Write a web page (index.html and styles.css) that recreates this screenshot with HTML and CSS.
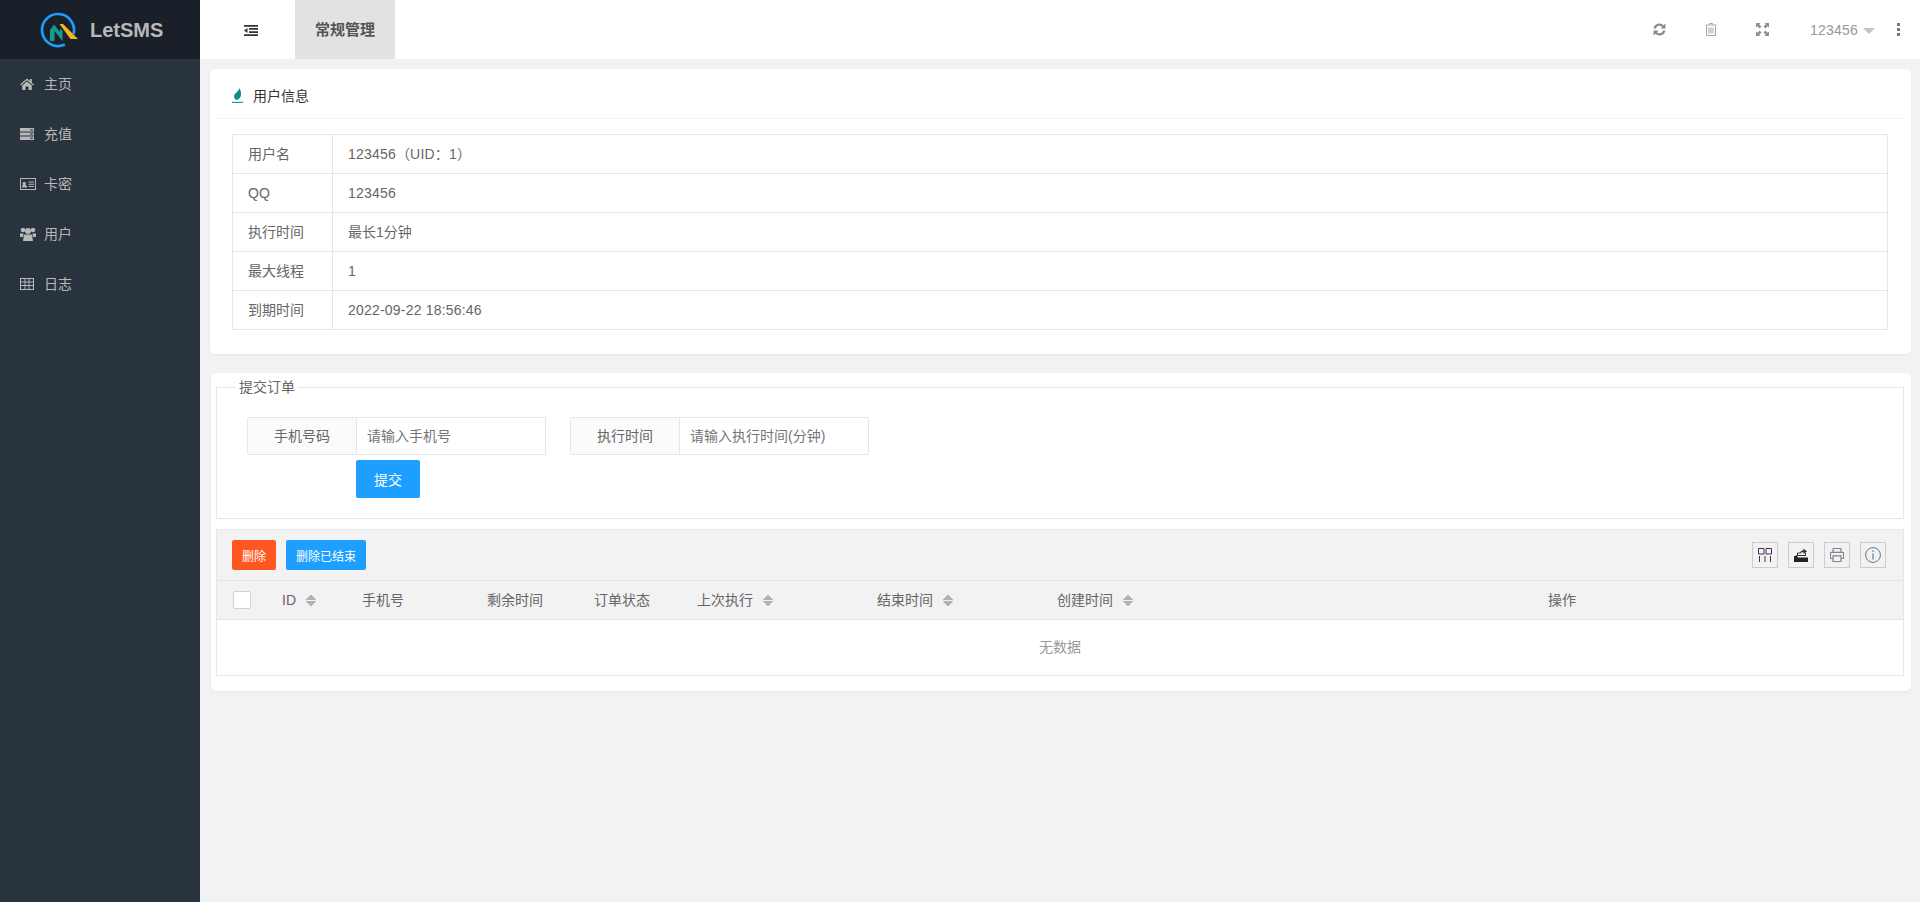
FILE: index.html
```html
<!DOCTYPE html>
<html lang="zh-CN">
<head>
    <meta charset="UTF-8">
    <meta name="viewport" content="width=device-width, initial-scale=1.0">
    <title>LetSMS</title>
    <link rel="stylesheet" href="styles.css">
</head>
<body>
    <div class="side">
        <div class="logo">
            <svg class="logo-mark" width="38" height="36" viewBox="40 12 38 36">
                <path d="M64.800 44.500A16 16 0 1 1 73.500 34.100" fill="none" stroke="#1e9fff" stroke-width="2.600"/>
                <path d="M50 30L54 24.500 60 32V28.500L62.500 31V41L54.500 31V41H50z" fill="#169c8c"/>
                <path d="M59.500 24H63L78 39H70.500z" fill="#f3b61f"/>
            </svg>
            <span class="logo-text">LetSMS</span>
        </div>
        <ul class="menu">
            <li>
                <svg class="menu-icon" viewBox="0 0 14 14"><path d="M7 1.500L0 7.600l.8.900L7 3.200l6.200 5.300.8-.9-2.200-1.900V2h-2v2L7 1.500zM2.200 8.600V13h3.300V9.600h3V13h3.300V8.600L7 4.600z"/></svg>
                <span>主页</span>
            </li>
            <li>
                <svg class="menu-icon" viewBox="0 0 14 14"><path d="M0 1h14v3.400H0zM0 5.400h14v3.200H0zM0 9.600h14V13H0z"/><path d="M10 2.200h3v1h-3zM10 6.500h3v1h-3zM10 10.800h3v1h-3z" fill="#28333e"/></svg>
                <span>充值</span>
            </li>
            <li>
                <svg class="menu-icon wide" viewBox="0 0 16 12"><path d="M0 0h16v12H0zm1 1v10h14V1z" fill-rule="evenodd"/><path d="M3 6.800a1.700 1.700 0 1 1 2.400 0L7 8v1.500H2V8zM8.500 3.500H14v1H8.500zM8.500 5.700H14v1H8.500zM8.500 7.900H14v1H8.500z"/></svg>
                <span>卡密</span>
            </li>
            <li>
                <svg class="menu-icon wide" viewBox="0 0 16 14"><circle cx="3" cy="3" r="2.300"/><circle cx="13" cy="3" r="2.300"/><circle cx="8" cy="4" r="3"/><path d="M0 6.500h3.500L3 10H0zM16 6.500h-3.500l.5 3.500h3zM4 7.500h8l1 6.500H3z"/></svg>
                <span>用户</span>
            </li>
            <li>
                <svg class="menu-icon" viewBox="0 0 14 12"><path d="M0 0h14v12H0zm1 1v2.500h3.500V1zm4.500 0v2.500h3V1zm4 0v2.500H13V1zM1 4.500V7h3.500V4.500zm4.500 0V7h3V4.500zm4 0V7H13V4.500zM1 8v3h3.500V8zm4.500 0v3h3V8zm4 0v3H13V8z" fill-rule="evenodd"/></svg>
                <span>日志</span>
            </li>
        </ul>
    </div>

    <div class="main">
        <div class="header">
            <div class="header-left">
                <svg class="toggle" width="14" height="11" viewBox="0 0 14 11"><path d="M0 0h14v1.800H0zM5 3h9v1.800H5zM5 6.200h9V8H5zM0 9.200h14V11H0zM3.500 3v5L0 5.500z" fill="#333"/></svg>
                <div class="tab">常规管理</div>
            </div>
            <div class="header-right">
                <svg class="head-icon" width="13" height="13" viewBox="0 0 13 13"><path d="M.5 5.500A6 6 0 0 1 10.600 2.300L12.500.5v5H7.500l1.600-1.700A3.600 3.600 0 0 0 3 5.500zM12.500 7.500A6 6 0 0 1 2.400 10.700L.5 12.500v-5h5l-1.600 1.700A3.600 3.600 0 0 0 10 7.500z" fill="#8a8a8a"/></svg>
                <svg class="head-icon" width="12" height="13" viewBox="0 0 12 13"><path d="M4.500 1.500V.5h3v1M.5 2h11M1.500 2.500v10h9v-10M4 4.500v6M6 4.500v6M8 4.500v6" fill="none" stroke="#a5a5a5"/></svg>
                <svg class="head-icon head-icon-last" width="13" height="13" viewBox="0 0 13 13"><path d="M0 0h4.500L3.200 1.300l2.300 2.300-1.900 1.900-2.300-2.300L0 4.500zM13 0v4.500l-1.300-1.300-2.300 2.300-1.900-1.900 2.300-2.300L8.500 0zM0 13V8.500l1.300 1.300 2.300-2.300 1.900 1.900-2.300 2.300L4.500 13zM13 13H8.500l1.300-1.300-2.300-2.300 1.900-1.900 2.300 2.300L13 8.500z" fill="#8f8f8f"/></svg>
                <span class="num">123456</span>
                <span class="head-caret"></span>
                <span class="head-dots"><i></i><i></i><i></i></span>
            </div>
        </div>

        <div class="content">
            <div class="card card-info">
                <div class="card-title">
                    <svg width="11" height="15" viewBox="0 0 11 15"><path d="M7.500 0C8 2 9.500 3.500 9 7 8.600 10 6.500 11.800 4.500 12 2.500 11.500 1.800 9.500 2.200 7.500 2.800 5 6.500 3.500 7.500 0z" fill="#0f8f84"/><path d="M0 13.800h11V15H0z" fill="#16a394"/></svg>
                    <span>用户信息</span>
                </div>
                <table class="info-table">
                    <tr><td class="info-name">用户名</td><td class="num">123456（UID：1）</td></tr>
                    <tr><td class="info-name">QQ</td><td class="num">123456</td></tr>
                    <tr><td class="info-name">执行时间</td><td>最长1分钟</td></tr>
                    <tr><td class="info-name">最大线程</td><td>1</td></tr>
                    <tr><td class="info-name">到期时间</td><td class="num">2022-09-22 18:56:46</td></tr>
                </table>
            </div>

            <div class="card card-order">
                <fieldset class="order-box">
                    <legend>提交订单</legend>
                    <div class="form-row">
                        <div class="form-group">
                            <label>手机号码</label>
                            <input type="text" placeholder="请输入手机号">
                        </div>
                        <div class="form-group">
                            <label>执行时间</label>
                            <input type="text" placeholder="请输入执行时间(分钟)">
                        </div>
                    </div>
                    <button type="button" class="btn btn-submit">提交</button>
                </fieldset>

                <div class="grid">
                    <div class="grid-tools">
                        <button type="button" class="btn btn-sm btn-red">删除</button>
                        <button type="button" class="btn btn-sm">删除已结束</button>
                        <div class="tool-icons">
                            <span class="tool-icon">
                                <svg width="14" height="14" viewBox="0 0 14 14"><path d="M.5.500h5.500v5.500H.5zM8 .500h5.500v5.500H8zM1.500 8v6M7 8v6M12.500 8v6" fill="none" stroke="#4a2a5a"/></svg>
                            </span>
                            <span class="tool-icon">
                                <svg width="14" height="14" viewBox="0 0 14 14"><path d="M0 8h3l1 1.500h10V14H0z" fill="#222"/><path d="M3.500 8V5h3M2 7.500h10M11.500 7.500V5" fill="none" stroke="#333"/><path d="M6 5.500C6 3 8 2.500 9.500 2.500V.5L13 3.500 9.500 6V4.200C8 4.200 7 4.500 6 5.500z" fill="#333"/></svg>
                            </span>
                            <span class="tool-icon">
                                <svg width="14" height="14" viewBox="0 0 16 16"><path d="M3.500 5V1.200A.7.700 0 0 1 4.200.5h7.600a.7.700 0 0 1 .7.700V5M3.500 12H1.200a.7.700 0 0 1-.7-.7V5.700A.7.700 0 0 1 1.200 5h13.600a.7.700 0 0 1 .7.700v5.600a.7.700 0 0 1-.7.700h-2.300M3.500 9h9v6.500h-9z" fill="none" stroke="#7d8791" stroke-width="1.400"/></svg>
                            </span>
                            <span class="tool-icon">
                                <svg width="16" height="16" viewBox="0 0 16 16"><circle cx="8" cy="8" r="7.400" fill="none" stroke="#6a737c"/><path d="M7.400 3.500h1.200v1.400H7.400zM7.400 6.500h1.200v6H7.400z" fill="#4a7fb0"/></svg>
                            </span>
                        </div>
                    </div>
                    <table class="grid-table">
                        <colgroup>
                            <col class="col-check"><col class="col-id"><col class="col-phone"><col class="col-left">
                            <col class="col-state"><col class="col-time"><col class="col-time"><col class="col-create"><col>
                        </colgroup>
                        <thead>
                            <tr>
                                <th class="cell-check"><span class="check"></span></th>
                                <th>ID<span class="sort"></span></th>
                                <th>手机号</th>
                                <th>剩余时间</th>
                                <th>订单状态</th>
                                <th>上次执行<span class="sort"></span></th>
                                <th>结束时间<span class="sort"></span></th>
                                <th>创建时间<span class="sort"></span></th>
                                <th>操作</th>
                            </tr>
                        </thead>
                        <tbody>
                            <tr><td colspan="9" class="empty">无数据</td></tr>
                        </tbody>
                    </table>
                </div>
            </div>
        </div>
    </div>
</body>
</html>
```

FILE: styles.css
```css
* {
    box-sizing: border-box;
}
body {
    display: flex;
    height: 902px;
    margin: 0;
    overflow: hidden;
    background-color: #f2f2f2;
    color: #666;
    font-family: "Liberation Sans", "Noto Sans CJK SC", sans-serif;
    font-size: 14px;
    line-height: 20px;
}
.num {
    letter-spacing: 0.2px;
}

/* sidebar */
.side {
    flex: 0 0 200px;
    background-color: #28333e;
}
.logo {
    display: flex;
    align-items: center;
    height: 59px;
    padding-left: 40px;
    background-color: #1a2029;
}
.logo-mark {
    flex: none;
}
.logo-text {
    margin-left: 12px;
    color: #b8b8b8;
    font-size: 20px;
    font-weight: bold;
}
.menu {
    margin: 0;
    padding: 0;
    list-style: none;
}
.menu li {
    display: flex;
    align-items: center;
    height: 50px;
    padding-left: 20px;
    color: #b8b8b8;
}
.menu-icon {
    flex: none;
    width: 14px;
    height: 14px;
    margin-right: 10px;
    fill: #b8b8b8;
}
.menu-icon.wide {
    width: 16px;
    margin-right: 8px;
}

/* header */
.main {
    flex: 1;
    min-width: 0;
}
.header {
    display: flex;
    justify-content: space-between;
    height: 59px;
    background: #fff;
}
.header-left {
    display: flex;
    align-items: center;
    padding-left: 44px;
}
.toggle {
    margin-top: 1px;
}
.tab {
    width: 100px;
    height: 59px;
    margin-left: 37px;
    background-color: #e2e2e2;
    color: #555;
    font-size: 15px;
    font-weight: bold;
    line-height: 59px;
    text-align: center;
}
.header-right {
    display: flex;
    align-items: center;
    padding-right: 20px;
    color: #999;
}
.head-icon {
    margin-right: 39px;
}
.head-icon-last {
    margin-right: 41px;
}
.head-caret {
    width: 0;
    height: 0;
    margin: 3px 0 0 5px;
    border-left: 6px solid transparent;
    border-right: 6px solid transparent;
    border-top: 6px solid #c2c2c2;
}
.head-dots {
    display: flex;
    flex-direction: column;
    gap: 2px;
    margin-left: 22px;
}
.head-dots i {
    width: 3px;
    height: 3px;
    background-color: #777;
}

/* cards */
.content {
    padding: 10px 9px 0 10px;
}
.card {
    background: #fff;
    border-radius: 5px;
    box-shadow: 0 1px 3px rgba(0,0,0,0.05);
}
.card-info {
    height: 285px;
    margin-bottom: 19px;
    padding: 0 23px 0 22px;
}
.card-title {
    display: flex;
    align-items: center;
    gap: 10px;
    height: 50px;
    margin: 0 -15px;
    padding: 4px 0 0 15px;
    border-bottom: 1px solid #f4f4f4;
    color: #333;
}
.info-table {
    width: 100%;
    margin-top: 15px;
    border-collapse: collapse;
}
.info-table td {
    height: 39px;
    padding: 0 15px;
    border: 1px solid #e6e6e6;
}
.info-table .info-name {
    width: 100px;
}
.card-order {
    height: 318px;
    margin-left: 1px;
    padding: 4px 7px 0 5px;
}

/* order form */
.order-box {
    height: 142px;
    margin: 0;
    padding: 20px 0 0;
    border: 1px solid #e6e6e6;
}
.order-box legend {
    margin-left: 19px;
    padding: 0 3px;
    line-height: 20px;
}
.form-row {
    display: flex;
    gap: 24px;
    padding-left: 30px;
}
.form-group {
    display: flex;
    width: 299px;
    height: 38px;
    border: 1px solid #e6e6e6;
    border-radius: 2px;
}
.form-group label {
    flex: 0 0 109px;
    background-color: #fbfbfb;
    border-right: 1px solid #e6e6e6;
    line-height: 36px;
    text-align: center;
}
.form-group input {
    flex: 1;
    min-width: 0;
    padding: 0 10px;
    border: none;
    background: transparent;
    font: inherit;
}
.form-group input::placeholder {
    color: #757575;
}
.btn {
    height: 30px;
    padding: 0 10px;
    border: none;
    border-radius: 2px;
    background-color: #1e9fff;
    color: #fff;
    font-family: inherit;
    font-size: 12px;
}
.btn-submit {
    display: block;
    width: 64px;
    height: 38px;
    margin: 5px 0 0 139px;
    padding: 0;
    font-size: 14px;
}
.btn-red {
    background-color: #ff5722;
}
.btn-sm + .btn-sm {
    margin-left: 10px;
}

/* data table */
.grid {
    margin-top: 10px;
    border: 1px solid #e6e6e6;
}
.grid-tools {
    display: flex;
    align-items: center;
    height: 51px;
    padding: 0 17px 0 15px;
    background-color: #f2f2f2;
    border-bottom: 1px solid #e6e6e6;
}
.tool-icons {
    display: flex;
    gap: 10px;
    margin-left: auto;
}
.tool-icon {
    display: flex;
    align-items: center;
    justify-content: center;
    width: 26px;
    height: 26px;
    border: 1px solid #ccc;
}
.grid-table {
    width: 100%;
    border-collapse: collapse;
    table-layout: fixed;
}
.col-check {
    width: 50px;
}
.col-id {
    width: 80px;
}
.col-phone {
    width: 125px;
}
.col-left {
    width: 107px;
}
.col-state {
    width: 103px;
}
.col-time {
    width: 180px;
}
.col-create {
    width: 491px;
}
.grid-table th {
    height: 38px;
    padding: 0 15px;
    background-color: #f2f2f2;
    border-bottom: 1px solid #e6e6e6;
    font-weight: normal;
    text-align: left;
    white-space: nowrap;
}
.grid-table .cell-check {
    padding: 0 0 0 16px;
}
.check {
    display: block;
    width: 18px;
    height: 18px;
    border: 1px solid #d2d2d2;
    border-radius: 2px;
    background: #fff;
}
.sort {
    display: inline-block;
    width: 10px;
    height: 13px;
    margin-left: 10px;
    vertical-align: -2px;
    background:
        linear-gradient(to top left, #b2b2b2 50%, transparent 50%) left top / 5px 6px no-repeat,
        linear-gradient(to top right, #b2b2b2 50%, transparent 50%) right top / 5px 6px no-repeat,
        linear-gradient(to bottom left, #b2b2b2 50%, transparent 50%) left bottom / 5px 6px no-repeat,
        linear-gradient(to bottom right, #b2b2b2 50%, transparent 50%) right bottom / 5px 6px no-repeat;
}
.empty {
    height: 56px;
    color: #999;
    text-align: center;
}
```
